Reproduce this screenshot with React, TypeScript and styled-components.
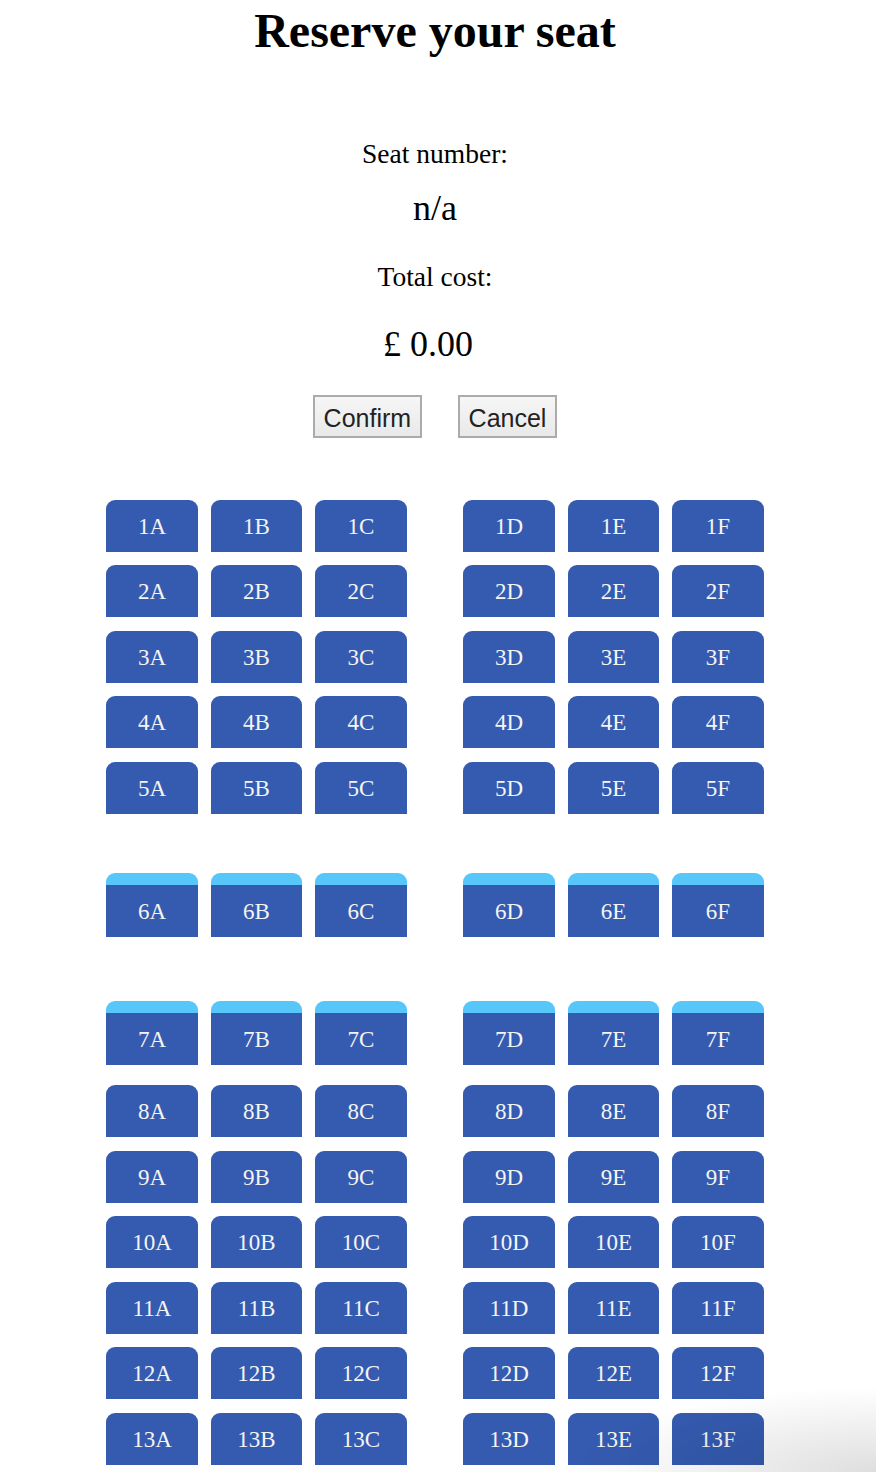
import React, { useState } from 'react';
import styled, { createGlobalStyle } from 'styled-components';

const GlobalStyle = createGlobalStyle`
  html, body {
    margin: 0;
    padding: 0;
    background: #ffffff;
  }
  body {
    font-family: "Liberation Serif", "Times New Roman", serif;
    color: #000;
  }
`

const Page = styled.div`
  display: flex;
  flex-direction: column;
  align-items: center;
  padding-top: 3px;
  padding-right: 6px;
`

const Title = styled.h1`
  margin: 0;
  font-size: 48px;
  line-height: 56px;
  font-weight: bold;
`

const Label = styled.div<{ top: number }>`
  margin-top: ${props => props.top}px;
  font-size: 27.5px;
  line-height: 32px;
`

const Value = styled.div<{ top: number; shift?: number }>`
  margin-top: ${props => props.top}px;
  padding-right: ${props => props.shift ?? 0}px;
  font-size: 36px;
  line-height: 40px;
`

const Actions = styled.div`
  margin-top: 30.5px;
  display: flex;
  gap: 36.5px;
`

const Button = styled.button`
  font-family: "Liberation Sans", Arial, sans-serif;
  font-size: 25px;
  line-height: 28px;
  color: #222;
  padding: 7px 8.5px 4px;
  border: 2px solid #ababab;
  border-radius: 0;
  background: linear-gradient(#f6f6f6, #e9e9e9);
  cursor: pointer;
`

const Plane = styled.div`
  margin-top: 62px;
  display: flex;
  flex-direction: column;
`

const Row = styled.div<{ space: number }>`
  margin-top: ${props => props.space}px;
  display: flex;
  align-items: flex-end;
  gap: 56.5px;
  &:first-child {
    margin-top: 0;
  }
`

const Block = styled.div`
  display: flex;
  gap: 13px;
`

const Seat = styled.button<{ exit: boolean; picked: boolean }>`
  width: 91.5px;
  height: ${props => (props.exit ? 64 : 52)}px;
  padding: 2px 0 0;
  border: none;
  border-top: ${props => (props.exit ? '12px solid #57c6f9' : 'none')};
  border-radius: 9px 9px 0 0;
  background: ${props => (props.picked ? '#2a4a94' : '#355bb0')};
  color: #f4f4f4;
  font-family: "Liberation Serif", "Times New Roman", serif;
  font-size: 23px;
  display: flex;
  align-items: center;
  justify-content: center;
  cursor: pointer;
`

const Shade = styled.div`
  position: fixed;
  right: 0;
  bottom: 0;
  width: 300px;
  height: 85px;
  pointer-events: none;
  background: radial-gradient(ellipse 100% 100% at 100% 100%, rgba(0, 0, 0, 0.13), rgba(0, 0, 0, 0));
`

const ROWS = 13
const EXIT_ROWS = [6, 7]
const PRICE = 25

const rowSpace = (row: number) => {
  if (row === 6) return 59.5
  if (row === 7) return 64
  if (row === 8) return 20
  return 13.5
}

const App: React.FC = () => {
  const [seat, setSeat] = useState<string | null>(null)
  const [confirmed, setConfirmed] = useState(false)

  const pick = (id: string) => {
    setSeat(id)
    setConfirmed(false)
  }

  const renderBlock = (row: number, letters: string[]) => (
    <Block>
      {letters.map(l => {
        const id = `${row}${l}`
        return (
          <Seat key={id} exit={EXIT_ROWS.includes(row)} picked={seat === id} onClick={() => pick(id)}>
            {id}
          </Seat>
        )
      })}
    </Block>
  )

  return (
    <>
      <GlobalStyle />
      <Page>
        <Title>Reserve your seat</Title>
        <Label top={78.5}>Seat number:</Label>
        <Value top={18}>{seat ?? 'n/a'}</Value>
        <Label top={33.5}>Total cost:</Label>
        <Value top={31} shift={14}>£ {(seat ? PRICE : 0).toFixed(2)}</Value>
        <Actions>
          <Button onClick={() => setConfirmed(true)}>Confirm</Button>
          <Button onClick={() => { setSeat(null); setConfirmed(false) }}>Cancel</Button>
        </Actions>
        <Plane data-confirmed={confirmed}>
          {Array.from({ length: ROWS }, (_, i) => i + 1).map(row => (
            <Row key={row} space={rowSpace(row)}>
              {renderBlock(row, ['A', 'B', 'C'])}
              {renderBlock(row, ['D', 'E', 'F'])}
            </Row>
          ))}
        </Plane>
      </Page>
      <Shade />
    </>
  );
};

export default App;
